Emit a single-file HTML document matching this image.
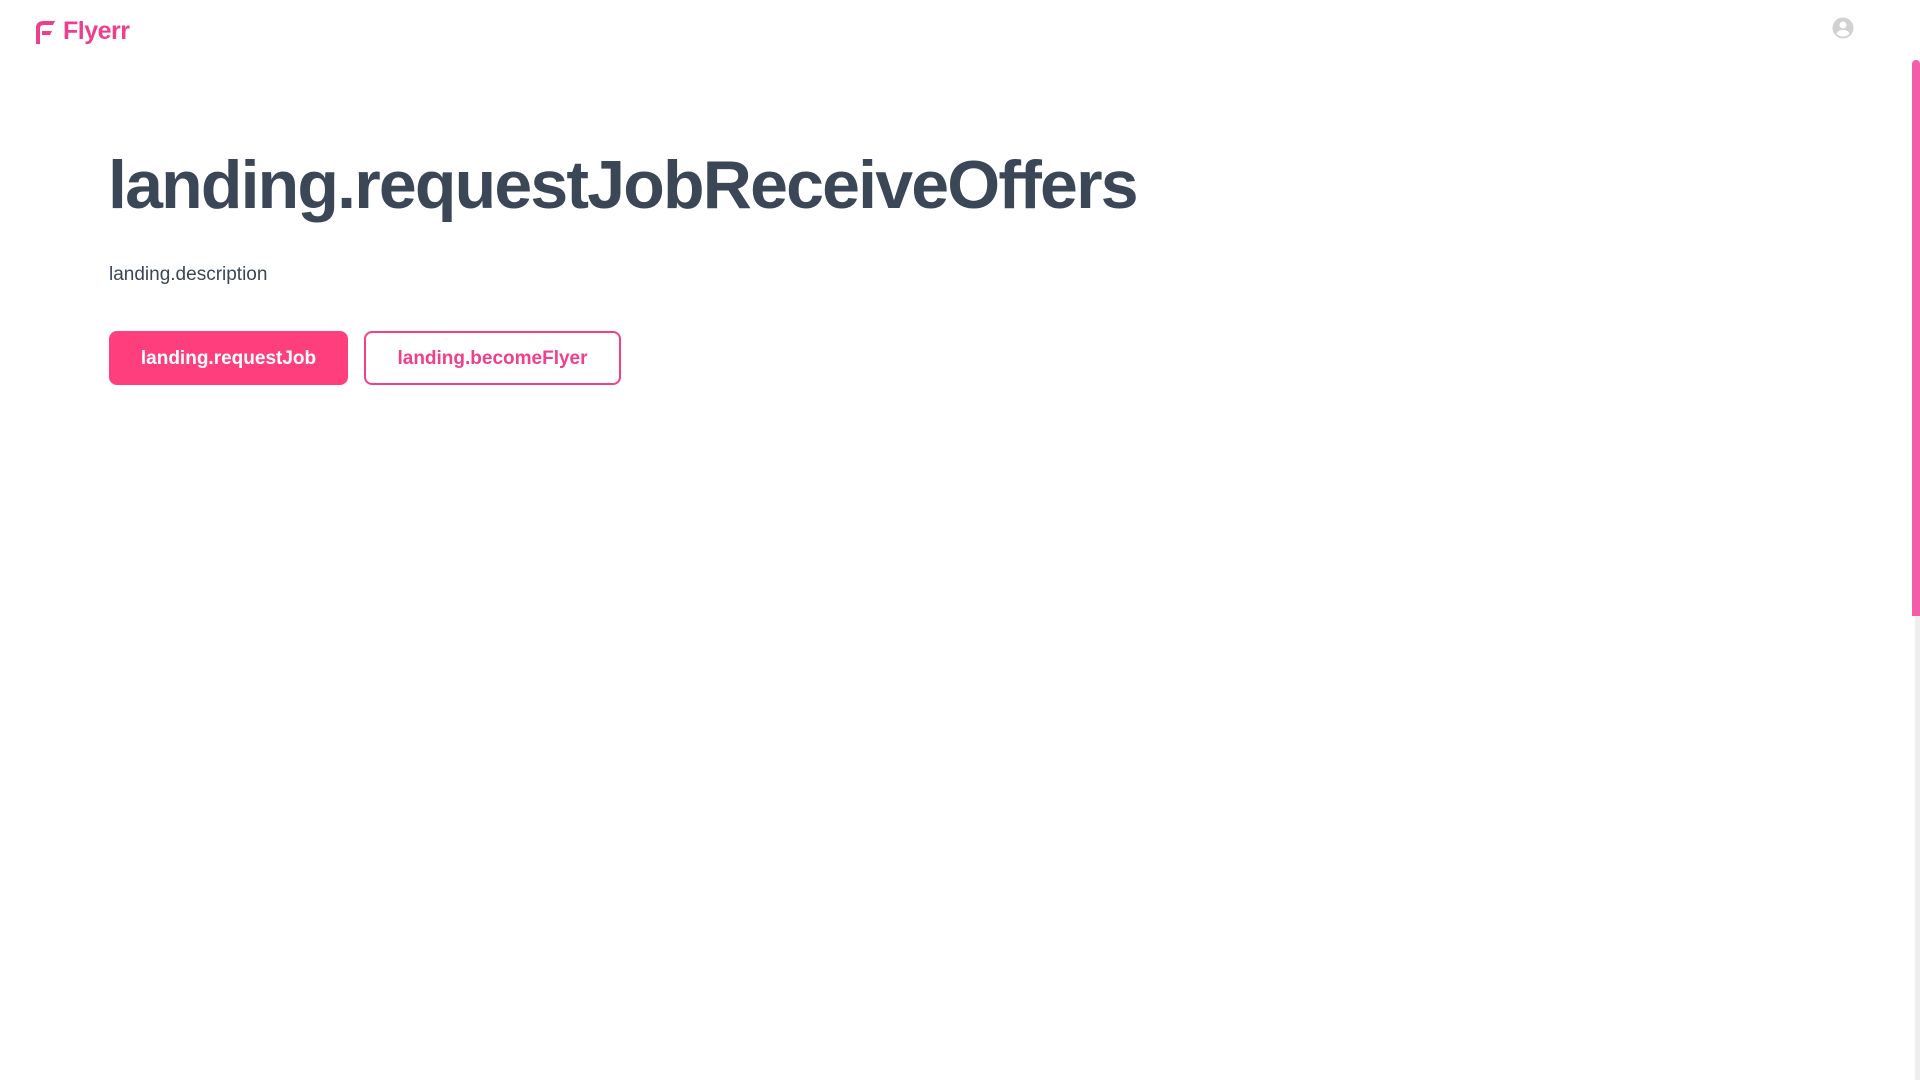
<!DOCTYPE html>
<html><head><meta charset="utf-8"><style>
html,body{margin:0;padding:0;width:1920px;height:1080px;overflow:hidden;background:#fff;font-family:"Liberation Sans",sans-serif;}
.logo{position:absolute;left:33px;top:17px;display:flex;align-items:center;color:#ee3f8c;}
.logo span{font-size:25px;font-weight:bold;margin-left:8px;letter-spacing:-0.5px;}
h1{position:absolute;left:108px;top:145px;margin:0;font-size:68px;font-weight:bold;color:#3b4656;letter-spacing:-1.8px;line-height:80px;white-space:nowrap;}
.desc{position:absolute;left:109px;top:264px;font-size:19px;color:#3b4656;}
.btn{position:absolute;top:331px;height:54px;box-sizing:border-box;border-radius:8px;display:flex;align-items:center;justify-content:center;font-size:19px;font-weight:bold;padding-top:2px;}
.b1{left:109px;width:239px;background:#ff3f7d;color:#fff;}
.b2{left:364px;width:257px;border:2px solid #f03f8b;color:#f03f8b;}
.track{position:absolute;left:1915px;top:60px;width:5px;height:1020px;background:#eee;}
.thumb{position:absolute;left:1912px;top:60px;width:8px;height:556px;background:#f25ca8;border-radius:4px 4px 0 0;}
</style></head><body>
<div class="logo"><svg width="22" height="24" viewBox="0 0 22 24"><path d="M3 24V8C3 3 6 1 11 1H22L20 5H11C8 5 7 6 7 9V24Z" fill="#ee3f8c"/><path d="M9 11H19L17 15H9Z" fill="#ee3f8c"/></svg><span>Flyerr</span></div>
<svg style="position:absolute;left:1832px;top:17px" width="22" height="22" viewBox="0 0 22 22"><circle cx="11" cy="11" r="10.5" fill="#d1d1d1"/><circle cx="11" cy="8" r="3.5" fill="#fff"/><path d="M4.5 16.5C6 13.5 8.5 13 11 13S16 13.5 17.5 16.5C16 18.5 13.5 19.5 11 19.5S6 18.5 4.5 16.5Z" fill="#fff"/></svg>
<h1>landing.requestJobReceiveOffers</h1>
<div class="desc">landing.description</div>
<div class="btn b1">landing.requestJob</div>
<div class="btn b2">landing.becomeFlyer</div>
<div class="track"></div><div class="thumb"></div>
</body></html>
